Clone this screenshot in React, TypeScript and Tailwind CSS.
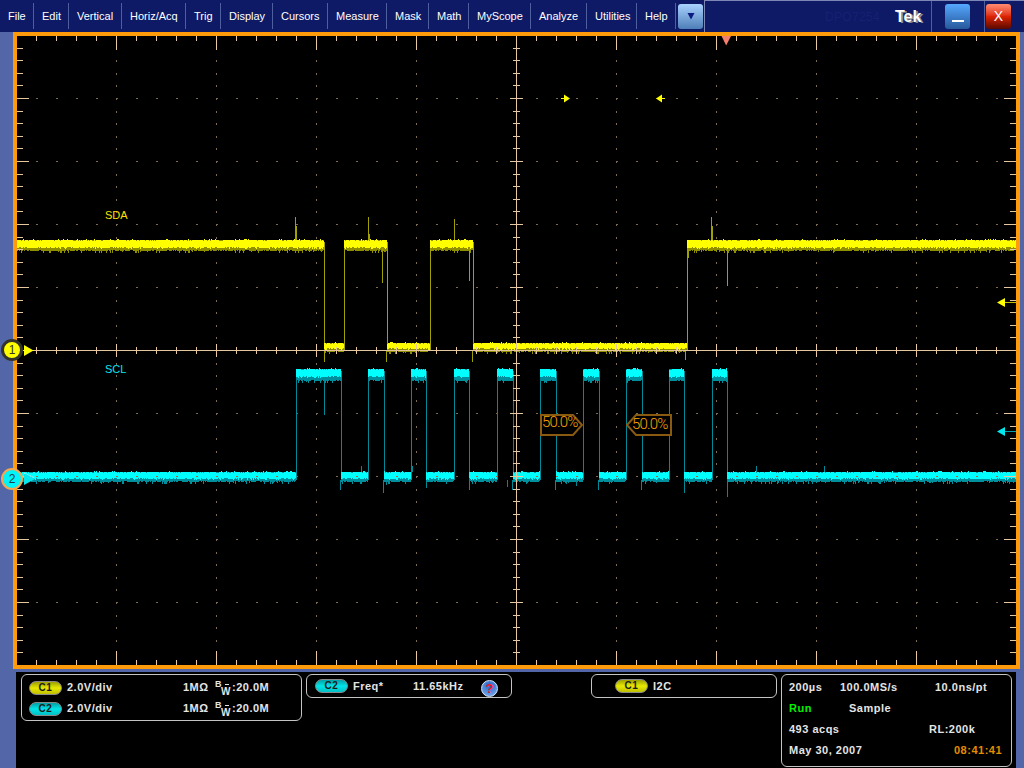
import React from "react";

const FONT = "font-['Liberation_Sans',Arial,sans-serif]";

// seeded so the noise is the same on each load
function makeRand(seed: number) {
  let a = seed;
  return () => {
    a |= 0;
    a = (a + 0x6d2b79f5) | 0;
    let t = Math.imul(a ^ (a >>> 15), 1 | a);
    t = (t + Math.imul(t ^ (t >>> 7), 61 | t)) ^ t;
    return ((t ^ (t >>> 14)) >>> 0) / 4294967296;
  };
}

type Level = { top: number; bright: number; dim: number };

function buildWave(seed: number, edges: number[], startHigh: boolean, hi: Level, lo: Level) {
  const r = makeRand(seed);
  let bright = "";
  let dim = "";
  let edge = "";
  let high = startHigh;
  for (let i = 0; i < edges.length - 1; i++) {
    const x0 = Math.round(edges[i]);
    const x1 = Math.round(edges[i + 1]);
    const l = high ? hi : lo;
    for (let x = x0; x < x1; x++) {
      const t = l.top + (r() < 0.25 ? 1 : 0) - (r() < 0.1 ? 1 : 0);
      const b = l.bright - (r() < 0.35 ? 1 : 0) + (r() < 0.15 ? 1 : 0);
      const d = l.dim + (r() < 0.12 ? 2 : 0) - (r() < 0.25 ? 1 : 0);
      bright += `M${x + 0.5} ${t}V${b}`;
      dim += `M${x + 0.5} ${l.top}V${d}`;
    }
    if (i > 0) {
      edge += `M${x0 + 0.5} ${hi.top + 2}V${lo.dim - 2}`;
    }
    high = !high;
  }
  return { bright, dim, edge };
}

const sclEdges = [17, 295.5, 340.5, 368.3, 383.7, 411.3, 426.3, 454.3, 469.3, 497.3, 512.7, 540.3, 555.7, 583.3, 598.7, 626.3, 641.7, 669, 684.3, 711.7, 727, 1016];

const sda = buildWave(
  7,
  [17, 324, 344, 386.5, 430, 472.5, 687, 1016],
  true,
  { top: 240, bright: 248, dim: 251 },
  { top: 343, bright: 349, dim: 352 }
);

const scl = buildWave(
  23,
  sclEdges,
  false,
  { top: 369, bright: 377, dim: 381 },
  { top: 472, bright: 479, dim: 482 }
);

const sdaSpikes =
  "M295.5 217V240M296.5 226V240M368.5 217V240M369.5 234V240M454.5 219V240M711.5 217V240M712.5 226V240" +
  "M382.5 248V283M469.5 248V281M727.5 248V286M324.5 350V362M386.5 350V362M472.5 350V362M685.5 350V360M344.5 250V256M430.5 250V254M688.5 250V258";

const sclSpikes =
  "M340.5 480V490M383.5 480V493M426.5 480V488M469.5 480V490M512.5 480V490M555.5 480V490M598.5 480V490M641.5 480V490M684.5 480V493M727.5 480V497" +
  "M324.5 379V415M296.5 466V472M386.5 480V485M412.5 466V472M361.5 466V472M507.5 480V487M576.5 480V486M756.5 466V472M824.5 466V472M853.5 480V484";

const xTicks = Array.from({ length: 49 }, (_, i) => 36.5 + i * 20);
const yTicks = Array.from({ length: 49 }, (_, i) => Math.floor(350.5 + (i - 24) * 12.6) + 0.5);
const isMajorX = (i: number) => (i - 4) % 5 === 0;
const isMajorY = (i: number) => (i - 24) % 5 === 0;

function ticksPath() {
  let d = "M516.5 36V665M17 350.5H1016";
  xTicks.forEach((x, i) => {
    const major = isMajorX(i);
    d += `M${x} 36V${major ? 50 : 41}M${x} 665V${major ? 651 : 660}`;
    d += `M${x} ${major ? 344 : 346.5}V${major ? 357 : 354}`;
  });
  yTicks.forEach((y, i) => {
    const major = isMajorY(i);
    d += `M17 ${y}H${major ? 29 : 23}M1016 ${y}H${major ? 1004 : 1010}`;
    d += `M${major ? 510 : 513} ${y}H${major ? 523 : 520}`;
  });
  return d;
}

function dotsPath() {
  let d = "";
  xTicks.forEach((x, i) => {
    if (!isMajorX(i) || x === 516.5) return;
    yTicks.forEach((y) => {
      d += `M${x} ${y - 1}V${y + 1}`;
    });
  });
  yTicks.forEach((y, i) => {
    if (!isMajorY(i) || y === 350.5) return;
    xTicks.forEach((x) => {
      d += `M${x - 1} ${y}H${x + 1}`;
    });
  });
  return d;
}

// grid dots show through the low part of the cyan trace as a dull red
function sclDots() {
  let d = "";
  xTicks.forEach((x) => {
    for (let i = 0; i < sclEdges.length - 1; i += 2) {
      if (x > sclEdges[i] && x < sclEdges[i + 1]) d += `M${x - 1} 476.5H${x + 1}`;
    }
  });
  return d;
}

function Graticule() {
  return (
    <svg width="999" height="629" viewBox="17 36 999 629" className="block" fill="none">
      <g strokeWidth="1" shapeRendering="crispEdges">
        <path d={dotsPath()} stroke="#7d6c52" />
        <path d={sda.dim} stroke="#8f8f00" />
        <path d={sda.edge + sdaSpikes} stroke="#a0a000" />
        <path d={sda.bright} stroke="#ffff00" />
        <path d={scl.dim} stroke="#008f9c" />
        <path d={scl.edge + sclSpikes} stroke="#008a98" />
        <path d={scl.bright} stroke="#00ffff" />
        <path d={sclDots()} stroke="#b0603c" />
        <path d={ticksPath()} stroke="#e6c7a0" />
        <path d="M1005 302.5H1016" stroke="#c0c000" />
        <path d="M1005 431.5H1016" stroke="#00a0aa" />
        <path d="M24 350.5H34" stroke="#ffff00" />
      </g>
      {/* trigger marker and level arrows */}
      <polygon points="721.5,36 731,36 726.2,45.5" fill="#f47f6e" />
      <polygon points="997,302.5 1005,298 1005,307" fill="#ffff00" />
      <polygon points="997,431.5 1005,427 1005,436" fill="#00e8f0" />
      <path d="M561 98.5H567" stroke="#ffff00" />
      <polygon points="564,94.5 570,98.5 564,102.5" fill="#ffff00" />
      <path d="M659 98.5H665" stroke="#ffff00" />
      <polygon points="662,94.5 656,98.5 662,102.5" fill="#ffff00" />
      {/* channel arrows */}
      <polygon points="24,345 33.5,350.5 24,356" fill="#ffff00" />
      <polygon points="24,473 35,479 24,485" fill="#00e8f0" />
      <path d="M24 473L35 478" stroke="#d8d8d8" strokeDasharray="2 1" />
      {/* cursor readout boxes */}
      <polygon points="541,415 573,415 582,425 573,435 541,435" stroke="#8a5a10" strokeWidth="2" fill="#000" />
      <polygon points="671,415 636,415 627,425 636,435 671,435" stroke="#8a5a10" strokeWidth="2" fill="#000" />
    </svg>
  );
}

const menu = [
  ["File", 33],
  ["Edit", 34],
  ["Vertical", 52],
  ["Horiz/Acq", 63],
  ["Trig", 34],
  ["Display", 51],
  ["Cursors", 54],
  ["Measure", 58],
  ["Mask", 41],
  ["Math", 39],
  ["MyScope", 61],
  ["Analyze", 55],
  ["Utilities", 49],
  ["Help", 38],
] as const;

function Chip({ label, color }: { label: string; color: "yellow" | "cyan" }) {
  return (
    <span
      className={
        "flex h-[14px] w-[33px] shrink-0 items-center justify-center rounded-full border border-[#8a8a8a] text-[10px] font-bold leading-none tracking-[0.5px] text-[#1a1a1a] " +
        (color === "yellow"
          ? "bg-linear-to-b from-[#a0a000] via-[#e8e800] to-[#c0c000]"
          : "bg-linear-to-b from-[#00a0a6] via-[#00e4e8] to-[#00c0c6]")
      }
    >
      {label}
    </span>
  );
}

function Bandwidth() {
  return (
    <span className="mt-px flex h-[13px] w-[17px] shrink-0 flex-col font-bold">
      <span className="flex h-[6px] items-center text-[9px] leading-none tracking-normal">
        B<span className="ml-[3px] h-px w-[4px] bg-[#e4e4e4]" />
      </span>
      <span className="ml-[6px] h-[7px] text-[10px] leading-[7px] tracking-normal">W</span>
    </span>
  );
}

function VerticalRow({ label, color }: { label: string; color: "yellow" | "cyan" }) {
  return (
    <div className="flex h-[21px] items-center">
      <span className="w-[38px] shrink-0">
        <Chip label={label} color={color} />
      </span>
      <span className="w-[116px] shrink-0">2.0V/div</span>
      <span className="w-[32px] shrink-0">1MΩ</span>
      <Bandwidth />
      <span>:20.0M</span>
    </div>
  );
}

const panel = "rounded-[6px] border border-[#c4c4c4] text-[11px] font-bold tracking-[0.5px] text-[#e4e4e4]";

export default function App() {
  return (
    <div className={`relative h-[768px] w-[1024px] overflow-hidden bg-[#5367a8] ${FONT}`}>
      <header className="flex h-[32px] items-center bg-[#0e1a66] text-[11px] text-white">
        {menu.map(([name, w]) => (
          <React.Fragment key={name}>
            <div className="flex items-center pl-2" style={{ width: w }}>
              {name}
            </div>
            <div className="h-[26px] w-px bg-[#4d5f9e]" />
          </React.Fragment>
        ))}
        <div className="ml-[2px] flex h-[25px] w-[25px] items-center justify-center rounded-[3px] bg-linear-to-b from-[#a9d2ff] to-[#4f7fb8]">
          <svg width="8" height="8" viewBox="0 0 8 8">
            <polygon points="0.5,1 7.5,1 4,7.5" fill="#0e1a7e" />
          </svg>
        </div>
        <div className="ml-px flex h-full flex-1 items-center border-t border-l border-[#7d86b4]">
          <span className="ml-[120px] w-[70px] text-[12px] tracking-[0.3px] text-[#162172]">DPO7254</span>
          <span className="w-[36px] text-[16px] font-bold leading-none text-white [text-shadow:2px_1px_0_#8a8a8a]">Tek</span>
          <div className="h-full w-px bg-[#4d5f9e]" />
          <div className="ml-[13px] flex h-[25px] w-[25px] items-center justify-center rounded-[3px] bg-linear-to-b from-[#55a8ff] to-[#27599c]">
            <span className="mt-[8px] h-[2px] w-[12px] bg-white" />
          </div>
          <div className="ml-[14px] h-full w-px bg-[#4d5f9e]" />
          <div className="ml-[1px] flex h-[25px] w-[25px] items-center justify-center rounded-[3px] bg-linear-to-b from-[#ff8a70] via-[#dd2200] to-[#5a0a00] text-[14px] text-white">
            X
          </div>
        </div>
      </header>

      <main className="ml-[13px] h-[637px] w-[1007px] border-4 border-[#ff9a0a] bg-black">
        <Graticule />
      </main>

      <footer className="ml-[16px] mt-[3px] flex h-[96px] w-[1000px] items-start gap-[4px] bg-black pl-[5px] pt-[2px]">
        <div className={`${panel} h-[47px] w-[281px] px-[7px] py-[2px]`}>
          <VerticalRow label="C1" color="yellow" />
          <VerticalRow label="C2" color="cyan" />
        </div>
        <div className={`${panel} flex h-[24px] w-[206px] items-center pl-[8px]`}>
          <span className="w-[38px] shrink-0">
            <Chip label="C2" color="cyan" />
          </span>
          <span className="w-[60px] shrink-0">Freq*</span>
          <span className="w-[68px] shrink-0">11.65kHz</span>
          <span className="mt-[5px] flex h-[17px] w-[17px] items-center justify-center rounded-full border border-[#d8e8ff] bg-[radial-gradient(circle_at_50%_30%,#2a62c4,#7fb2f0)] text-[13px] font-bold leading-none tracking-normal text-[#ff1020]">
            ?
          </span>
        </div>
        <div className={`${panel} ml-[75px] flex h-[24px] w-[186px] items-center pl-[23px]`}>
          <span className="w-[38px] shrink-0">
            <Chip label="C1" color="yellow" />
          </span>
          <span>I2C</span>
        </div>
        <div className={`${panel} h-[93px] w-[231px] px-[7px] py-[2px]`}>
          <div className="flex h-[21px] items-center">
            <span className="w-[51px]">200µs</span>
            <span className="w-[95px]">100.0MS/s</span>
            <span>10.0ns/pt</span>
          </div>
          <div className="flex h-[21px] items-center">
            <span className="w-[60px] text-[#00f000]">Run</span>
            <span>Sample</span>
          </div>
          <div className="flex h-[21px] items-center">
            <span className="w-[140px]">493 acqs</span>
            <span>RL:200k</span>
          </div>
          <div className="flex h-[21px] items-center">
            <span className="w-[165px]">May 30, 2007</span>
            <span className="text-[#e48c00]">08:41:41</span>
          </div>
        </div>
      </footer>

      {/* text and badges that sit over the graticule */}
      <span className="absolute left-[105px] top-[208px] text-[11px] leading-[14px] text-[#ffe000]">SDA</span>
      <span className="absolute left-[105px] top-[362px] text-[11px] leading-[14px] text-[#00e8f0]">SCL</span>
      <span className="absolute left-[542px] top-[413px] font-['Roboto',sans-serif] text-[15px] font-light leading-[18px] tracking-[-0.8px] text-[#ffa500]">50.0%</span>
      <span className="absolute left-[632px] top-[415px] font-['Roboto',sans-serif] text-[15px] font-light leading-[18px] tracking-[-0.8px] text-[#ffa500]">50.0%</span>
      <span className="absolute left-[1px] top-[339px] flex h-[22px] w-[22px] items-center justify-center rounded-full border-[3px] border-[#33332a] bg-[#ffff00] text-[12px] leading-none text-[#33332a]">
        1
      </span>
      <span className="absolute left-[1px] top-[468px] flex h-[22px] w-[22px] items-center justify-center rounded-full border-[2px] border-[#f5a650] bg-[#00f4f8] text-[12px] leading-none text-[#1c3a44]">
        2
      </span>
    </div>
  );
}
